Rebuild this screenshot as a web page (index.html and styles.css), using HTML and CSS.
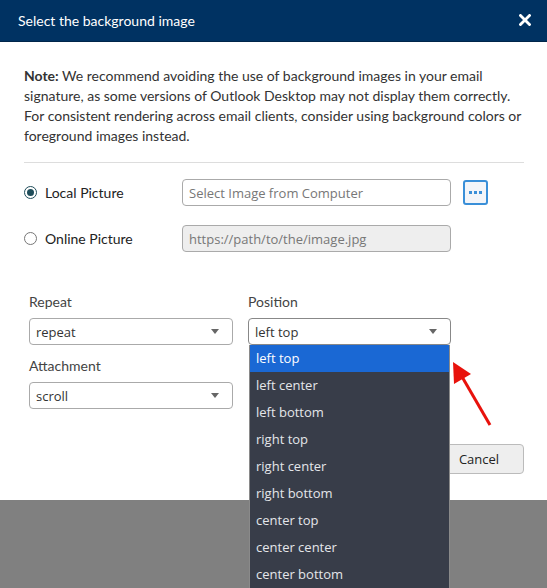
FILE: index.html
```html
<!DOCTYPE html>
<html lang="en">
<head>
    <meta charset="UTF-8">
    <meta name="viewport" content="width=device-width, initial-scale=1.0">
    <title>Select the background image</title>
    <link rel="stylesheet" href="styles.css">
</head>
<body>
    <div class="modal">
        <div class="modal-header">
            <span class="modal-title">Select the background image</span>
            <svg class="close-icon" width="12" height="12" viewBox="0 0 12 12">
                <path d="M1.5 1.5 L10.5 10.5 M10.5 1.5 L1.5 10.5" stroke="#fff" stroke-width="2.8" stroke-linecap="square"/>
            </svg>
        </div>

        <div class="modal-body">
            <p class="note"><b>Note:</b> We recommend avoiding the use of background images in your email signature, as some versions of Outlook Desktop may not display them correctly. For consistent rendering across email clients, consider using background colors or foreground images instead.</p>
            <hr>

            <!-- source of the picture -->
            <div class="source-row">
                <label class="radio"><span class="radio-dot checked"></span>Local Picture</label>
                <div class="text-input">Select Image from Computer</div>
                <button class="browse-btn"><span></span><span></span><span></span></button>
            </div>
            <div class="source-row">
                <label class="radio"><span class="radio-dot"></span>Online Picture</label>
                <div class="text-input disabled">https://path/to/the/image.jpg</div>
            </div>

            <!-- repeat / position / attachment -->
            <div class="options">
                <div class="field">
                    <div class="field-label">Repeat</div>
                    <div class="select"><span>repeat</span><span class="caret"></span></div>
                </div>
                <div class="field">
                    <div class="field-label">Position</div>
                    <div class="select open"><span>left top</span><span class="caret"></span></div>
                    <ul class="dropdown">
                        <li class="active">left top</li>
                        <li>left center</li>
                        <li>left bottom</li>
                        <li>right top</li>
                        <li>right center</li>
                        <li>right bottom</li>
                        <li>center top</li>
                        <li>center center</li>
                        <li>center bottom</li>
                    </ul>
                </div>
                <div class="field">
                    <div class="field-label">Attachment</div>
                    <div class="select"><span>scroll</span><span class="caret"></span></div>
                </div>
            </div>

            <div class="modal-footer">
                <button class="cancel-btn">Cancel</button>
            </div>

            <svg class="pointer" width="60" height="80" viewBox="0 0 60 80">
                <line x1="11" y1="15" x2="40" y2="65" stroke="#e8120c" stroke-width="3"/>
                <polygon points="3,2 4,24 21,14" fill="#e8120c"/>
            </svg>
        </div>
    </div>
</body>
</html>
```

FILE: styles.css
```css
html {
    background: #808080;
}
body {
    margin: 0;
    height: 588px;
    overflow: hidden;
    font-family: Lato, "Open Sans", sans-serif;
    font-size: 14px;
    color: #333;
}
.modal {
    background: #fff;
}
.modal-header {
    height: 41px;
    background: #003262;
    border-bottom: 1px solid #00254a;
    display: flex;
    align-items: center;
    justify-content: space-between;
    padding: 0 16px 0 18px;
}
.modal-title {
    color: #fff;
    font-size: 14px;
}
.close-icon {
    display: block;
    margin-top: -2px;
}
.modal-body {
    position: relative;
    padding: 24px 23px 26px 24px;
}
.note {
    margin: 0;
    line-height: 20px;
    color: #333;
}
hr {
    border: 0;
    border-top: 1px solid #ddd;
    margin: 16px 0 16px;
}
.source-row {
    display: flex;
    align-items: center;
    margin-bottom: 19px;
}
.radio {
    display: flex;
    align-items: center;
    width: 158px;
    color: #222;
}
.radio-dot {
    box-sizing: border-box;
    width: 13px;
    height: 13px;
    border: 1px solid #777;
    border-radius: 50%;
    margin-right: 8px;
    position: relative;
}
.radio-dot.checked {
    border-color: #1f4d5a;
}
.radio-dot.checked::after {
    content: "";
    position: absolute;
    left: 2px;
    top: 2px;
    width: 7px;
    height: 7px;
    border-radius: 50%;
    background: #1f4d5a;
}
.text-input,
.select {
    box-sizing: border-box;
    height: 27px;
    border: 1px solid #aaa;
    border-radius: 4px;
    padding: 0 6px;
    display: flex;
    align-items: center;
    font-family: "Open Sans", sans-serif;
    font-size: 13px;
}
.text-input {
    width: 269px;
    color: #777;
}
.text-input.disabled {
    background: #eee;
}
.browse-btn {
    box-sizing: border-box;
    width: 25px;
    height: 25px;
    margin-left: 12px;
    border: 2px solid #3a8fd8;
    border-radius: 3px;
    background: #f3f5f9;
    display: flex;
    align-items: center;
    justify-content: center;
    gap: 2px;
    padding: 0;
}
.browse-btn span {
    width: 3px;
    height: 3px;
    background: #3a8fd8;
}
.options {
    display: grid;
    grid-template-columns: 204px 203px;
    column-gap: 15px;
    row-gap: 11px;
    padding: 21px 0 0 5px;
}
.field {
    position: relative;
}
.field-label {
    line-height: 20px;
    margin-bottom: 6px;
    color: #444;
}
.select {
    justify-content: space-between;
    color: #333;
}
.select.open {
    border-color: #888;
}
.caret {
    width: 0;
    height: 0;
    border-left: 4px solid transparent;
    border-right: 4px solid transparent;
    border-top: 5px solid #666;
    margin-right: 7px;
}
.dropdown {
    position: absolute;
    left: 1px;
    top: 53px;
    width: 201px;
    box-sizing: border-box;
    margin: 0;
    padding: 0;
    list-style: none;
    background: #383d49;
    border: 1px solid #8a8a8a;
    border-top: 0;
    z-index: 10;
}
.dropdown li {
    height: 27px;
    line-height: 27px;
    padding: 0 6px;
    font-family: "Open Sans", sans-serif;
    font-size: 13px;
    color: #e4e6ea;
}
.dropdown li.active {
    background: #1a68d4;
    color: #fff;
}
.modal-footer {
    display: flex;
    justify-content: flex-end;
    margin-top: 35px;
}
.cancel-btn {
    width: 90px;
    height: 30px;
    border: 1px solid #bbb;
    border-radius: 4px;
    background: #eee;
    font-family: "Open Sans", sans-serif;
    font-size: 13px;
    color: #222;
}
.pointer {
    position: absolute;
    left: 450px;
    top: 318px;
    z-index: 11;
}
```
